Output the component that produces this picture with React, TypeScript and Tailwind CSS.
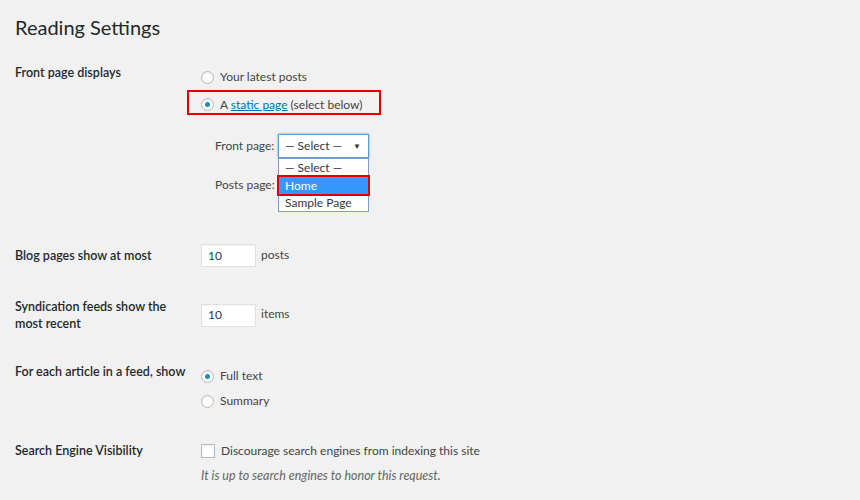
import React from "react";

const Radio = ({ checked }: { checked?: boolean }) => (
  <span className="flex h-[13px] w-[13px] shrink-0 items-center justify-center rounded-full border border-[#b4b9be] bg-white shadow-[inset_0_1px_2px_rgba(0,0,0,0.07)]">
    {checked && <span className="h-[5px] w-[5px] rounded-full bg-[#1e8cbe]" />}
  </span>
);

const NumInput = ({ value }: { value: string }) => (
  <div className="flex h-[23px] w-[55px] items-center border border-[#e1e1e1] bg-white px-[6px] text-[#32373c] shadow-[inset_0_1px_2px_rgba(0,0,0,0.05)]">
    {value}
  </div>
);

export default function App() {
  return (
    <div className="h-[500px] w-[860px] overflow-hidden whitespace-nowrap bg-[#f1f1f1] px-[15px] font-['Lato',sans-serif] text-[12px] text-[#444]">
      <h1 className="pt-[13px] text-[20px] leading-[29px] text-[#23282d]">Reading Settings</h1>

      {/* Front page displays */}
      <div className="mt-[21px] flex">
        <div className="w-[185px] shrink-0 pt-[1px] text-[12.5px] font-semibold leading-[18px] text-[#23282d]">Front page displays</div>
        <div className="pt-[5px]">
          <div className="flex h-[18px] items-center gap-[6px] pl-[1px]">
            <Radio />
            <span>Your latest posts</span>
          </div>
          <div className="ml-[-13px] mt-[4px] flex h-[25px] w-[194px] items-center gap-[6px] border-2 border-[#e00000] pl-[12px] pt-[4px]">
            <Radio checked />
            <span>
              A <span className="text-[#0073aa] underline">static page</span> (select below)
            </span>
          </div>

          <div className="ml-[15px] mt-[19px] flex items-center gap-[7px]">
            <span className="w-[56px]">Front page:</span>
            <div className="relative">
              <div className="flex h-[24px] w-[91px] items-center justify-between border border-[#5b9dd9] bg-white pl-[6px] pr-[7px] text-[#32373c] shadow-[0_0_2px_rgba(30,140,190,0.8)]">
                <span>— Select —</span>
                <span className="text-[8px]">▼</span>
              </div>
              <div className="absolute left-0 top-[24px] z-10 w-[91px] border border-[#7a9cd3] bg-white text-[#32373c]">
                <div className="h-[18px] pl-[6px] leading-[17px]">— Select —</div>
                <div className="h-[17px] bg-[#3399ff] pl-[6px] leading-[17px] text-white outline outline-2 outline-[#e00000]">Home</div>
                <div className="h-[17px] pl-[6px] leading-[17px]">Sample Page</div>
              </div>
            </div>
          </div>
          <div className="ml-[15px] mt-[15px] flex items-center gap-[7px]">
            <span className="w-[56px]">Posts page:</span>
            <div className="h-[24px] w-[91px] border border-[#ddd] bg-white" />
          </div>
        </div>
      </div>

      {/* Blog pages */}
      <div className="mt-[47px] flex items-center">
        <div className="w-[186px] shrink-0 pt-[1px] text-[12.5px] font-semibold text-[#23282d]">Blog pages show at most</div>
        <NumInput value="10" />
        <span className="ml-[5px] -mt-[2px]">posts</span>
      </div>

      {/* Syndication */}
      <div className="mt-[31px] flex items-center">
        <div className="w-[186px] shrink-0 text-[12.5px] font-semibold leading-[17px] text-[#23282d]">
          Syndication feeds show the
          <br />
          most recent
        </div>
        <NumInput value="10" />
        <span className="ml-[5px] -mt-[2px]">items</span>
      </div>

      {/* Feed article */}
      <div className="mt-[31px] flex">
        <div className="w-[186px] shrink-0 text-[12.5px] font-semibold leading-[18px] text-[#23282d]">For each article in a feed, show</div>
        <div className="pt-[4px]">
          <div className="flex h-[18px] items-center gap-[6px]">
            <Radio checked />
            <span>Full text</span>
          </div>
          <div className="mt-[7px] flex h-[18px] items-center gap-[6px]">
            <Radio />
            <span>Summary</span>
          </div>
        </div>
      </div>

      {/* Search engine */}
      <div className="mt-[30px] flex">
        <div className="w-[186px] shrink-0 pt-[2px] text-[12.5px] font-semibold leading-[18px] text-[#23282d]">Search Engine Visibility</div>
        <div>
          <div className="flex h-[22px] items-center gap-[6px]">
            <span className="h-[14px] w-[14px] border border-[#b4b9be] bg-white shadow-[inset_0_1px_2px_rgba(0,0,0,0.07)]" />
            <span>Discourage search engines from indexing this site</span>
          </div>
          <p className="mt-[5px] text-[12.5px] italic text-[#666]">It is up to search engines to honor this request.</p>
        </div>
      </div>
    </div>
  );
}
